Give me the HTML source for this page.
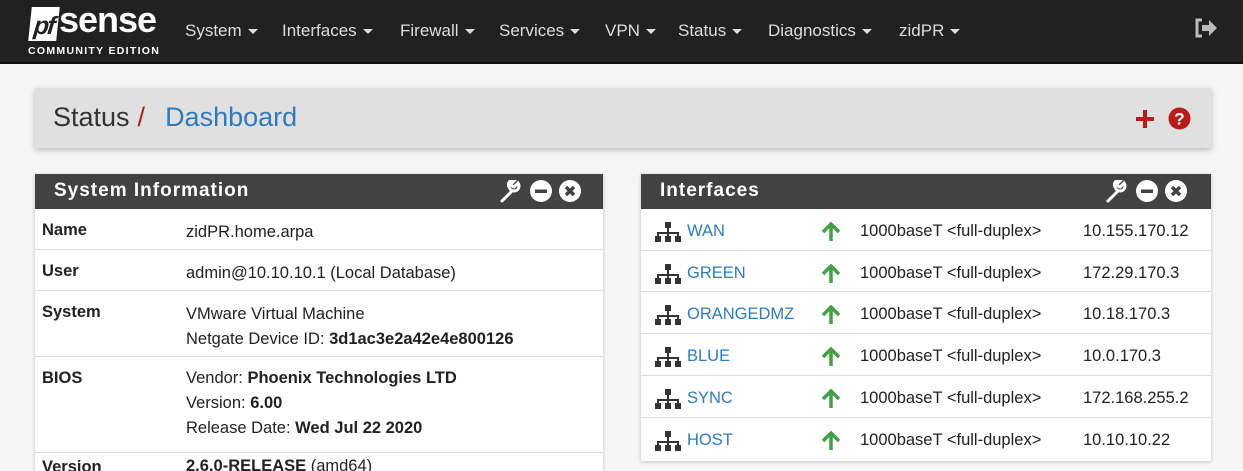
<!DOCTYPE html>
<html><head><meta charset="utf-8"><style>
*{margin:0;padding:0;box-sizing:border-box}
html,body{width:1243px;height:471px;overflow:hidden}
body{background:#f5f5f5;font-family:"Liberation Sans",sans-serif;font-size:16px;color:#212121;position:relative}
.nav{position:absolute;left:0;top:0;width:1243px;height:64px;background:#212121;border-bottom:2px solid #111}
.logo{position:absolute;left:30px;top:6px;color:#fff}
.pf{position:absolute;left:0;top:1px;width:28px;height:34px;background:#fff;color:#212121;font:italic bold 25px "Liberation Sans";line-height:38px;text-align:center;letter-spacing:-2px;transform:skewX(-6deg)}
.sense{position:absolute;left:29px;top:-7px;font:bold 36px "Liberation Sans";letter-spacing:-1px}
.ce{position:absolute;left:-2px;top:39px;font:bold 10.5px "Liberation Sans";letter-spacing:1.3px;white-space:nowrap}
.menu{position:absolute;top:21px;color:#ddd;font-size:17px;white-space:nowrap}
.menu span{position:absolute;white-space:nowrap}
.car{display:inline-block;width:0;height:0;border-left:5px solid transparent;border-right:5px solid transparent;border-top:5px solid #ddd;vertical-align:middle;margin-left:6px}
.bc{position:absolute;left:35px;top:88px;width:1176px;height:60px;background:#e0e0e0;box-shadow:0 2px 6px rgba(0,0,0,.25)}
.bc .t{position:absolute;left:18px;top:14px;font-size:27px;color:#333;white-space:nowrap}
.bc .t a{color:#2f7bbd;margin-left:20px}
.panel{position:absolute;top:174px;background:#fff;box-shadow:0 1px 4px rgba(0,0,0,.2)}
.ph{height:35px;background:#424242;color:#fff;font-size:19px;font-weight:bold;letter-spacing:1px;padding:6px 0 0 19px;position:relative}
.ph svg{position:absolute;top:6px}
.row{position:relative;border-bottom:1px solid #ddd;font-size:16.5px}
.lbl{position:absolute;left:7px;top:12px;font-weight:bold}
.val{position:absolute;left:151px;top:11px;line-height:25px}
.ir span{position:absolute;top:13px}
.blue{color:#2f7bbd}
</style></head><body>
<div class="nav">
 <div class="logo"><div class="pf">pf</div><div class="sense">sense</div><div class="ce">COMMUNITY EDITION</div></div>
 <div class="menu">
  <span style="left:185px">System<i class="car"></i></span>
  <span style="left:282px">Interfaces<i class="car"></i></span>
  <span style="left:400px">Firewall<i class="car"></i></span>
  <span style="left:499px">Services<i class="car"></i></span>
  <span style="left:605px">VPN<i class="car"></i></span>
  <span style="left:678px">Status<i class="car"></i></span>
  <span style="left:768px">Diagnostics<i class="car"></i></span>
  <span style="left:899px">zidPR<i class="car"></i></span>
 </div>
 <svg style="position:absolute;left:1194px;top:18px" width="24" height="20" viewBox="0 0 24 20"><path d="M8 2H3v16h5" fill="none" stroke="#bbb" stroke-width="3"/><path d="M8 7h7V2l8 8-8 8v-5H8z" fill="#bbb"/></svg>
</div>
<div class="bc"><div class="t">Status<span style="color:#b71c1c;margin-left:8px">/</span><a>Dashboard</a></div>
 <svg style="position:absolute;left:1100px;top:21px" width="20" height="20"><path d="M10 1v18M1 10h18" stroke="#b71c1c" stroke-width="4"/></svg>
 <svg style="position:absolute;left:1133px;top:19px" width="23" height="23" viewBox="0 0 23 23"><circle cx="11.5" cy="11.5" r="11" fill="#b71c1c"/><text x="11.5" y="17.5" text-anchor="middle" fill="#fff" font-family="Liberation Sans" font-weight="bold" font-size="17">?</text></svg>
</div>

<div class="panel" style="left:35px;width:568px;height:297px;overflow:hidden">
 <div class="ph">System Information
  <svg style="left:464px" width="88" height="24" viewBox="0 0 88 24"><path d="M3 21l9-9M11 9a5 5 0 1 0 8-6l-4 4-2-1-1-2 4-4a5 5 0 0 0-6 7" stroke="#fff" stroke-width="3" fill="none" stroke-linecap="round"/><circle cx="42" cy="11" r="11" fill="#fff"/><rect x="36" y="9.5" width="12" height="3.5" fill="#424242"/><circle cx="71" cy="11" r="11" fill="#fff"/><path d="M67 7l8 8M75 7l-8 8" stroke="#424242" stroke-width="3.5"/></svg>
 </div>
 <div class="row" style="height:41px"><span class="lbl">Name</span><span class="val">zidPR.home.arpa</span></div>
 <div class="row" style="height:41px"><span class="lbl">User</span><span class="val">admin@10.10.10.1 (Local Database)</span></div>
 <div class="row" style="height:66px"><span class="lbl">System</span><span class="val">VMware Virtual Machine<br>Netgate Device ID: <b>3d1ac3e2a42e4e800126</b></span></div>
 <div class="row" style="height:96px"><span class="lbl">BIOS</span><span class="val" style="top:9px">Vendor: <b>Phoenix Technologies LTD</b><br>Version: <b>6.00</b><br>Release Date: <b>Wed Jul 22 2020</b></span></div>
 <div class="row" style="height:40px;border:0"><span class="lbl" style="top:5px">Version</span><span class="val" style="top:1px"><b>2.6.0-RELEASE</b> (amd64)</span></div>
</div>

<div class="panel" style="left:641px;width:570px;height:287px">
 <div class="ph">Interfaces
  <svg style="left:464px" width="88" height="24" viewBox="0 0 88 24"><path d="M3 21l9-9M11 9a5 5 0 1 0 8-6l-4 4-2-1-1-2 4-4a5 5 0 0 0-6 7" stroke="#fff" stroke-width="3" fill="none" stroke-linecap="round"/><circle cx="42" cy="11" r="11" fill="#fff"/><rect x="36" y="9.5" width="12" height="3.5" fill="#424242"/><circle cx="71" cy="11" r="11" fill="#fff"/><path d="M67 7l8 8M75 7l-8 8" stroke="#424242" stroke-width="3.5"/></svg>
 </div>
</div>
<div style="position:absolute;left:641px;top:209px;width:570px">
 <div class="row ir" style="height:42px"><svg style="position:absolute;left:13px;top:13px" width="28" height="20" viewBox="0 0 28 20"><rect x="11" y="0" width="6" height="6" fill="#333"/><path d="M14 6v5M4 14v-3h20v3M14 11v3" stroke="#333" stroke-width="2" fill="none"/><rect x="1" y="14" width="6" height="6" fill="#333"/><rect x="11" y="14" width="6" height="6" fill="#333"/><rect x="21" y="14" width="6" height="6" fill="#333"/></svg><span class="blue" style="left:46px">WAN</span><svg style="position:absolute;left:180px;top:13px" width="20" height="20"><path d="M10 19V3M2 10l8-8 8 8" stroke="#43a047" stroke-width="3.5" fill="none"/></svg><span style="left:219px">1000baseT &lt;full-duplex&gt;</span><span style="left:442px">10.155.170.12</span></div>
 <div class="row ir" style="height:41px"><svg style="position:absolute;left:13px;top:13px" width="28" height="20" viewBox="0 0 28 20"><rect x="11" y="0" width="6" height="6" fill="#333"/><path d="M14 6v5M4 14v-3h20v3M14 11v3" stroke="#333" stroke-width="2" fill="none"/><rect x="1" y="14" width="6" height="6" fill="#333"/><rect x="11" y="14" width="6" height="6" fill="#333"/><rect x="21" y="14" width="6" height="6" fill="#333"/></svg><span class="blue" style="left:46px">GREEN</span><svg style="position:absolute;left:180px;top:13px" width="20" height="20"><path d="M10 19V3M2 10l8-8 8 8" stroke="#43a047" stroke-width="3.5" fill="none"/></svg><span style="left:219px">1000baseT &lt;full-duplex&gt;</span><span style="left:442px">172.29.170.3</span></div>
 <div class="row ir" style="height:42px"><svg style="position:absolute;left:13px;top:13px" width="28" height="20" viewBox="0 0 28 20"><rect x="11" y="0" width="6" height="6" fill="#333"/><path d="M14 6v5M4 14v-3h20v3M14 11v3" stroke="#333" stroke-width="2" fill="none"/><rect x="1" y="14" width="6" height="6" fill="#333"/><rect x="11" y="14" width="6" height="6" fill="#333"/><rect x="21" y="14" width="6" height="6" fill="#333"/></svg><span class="blue" style="left:46px">ORANGEDMZ</span><svg style="position:absolute;left:180px;top:13px" width="20" height="20"><path d="M10 19V3M2 10l8-8 8 8" stroke="#43a047" stroke-width="3.5" fill="none"/></svg><span style="left:219px">1000baseT &lt;full-duplex&gt;</span><span style="left:442px">10.18.170.3</span></div>
 <div class="row ir" style="height:42px"><svg style="position:absolute;left:13px;top:13px" width="28" height="20" viewBox="0 0 28 20"><rect x="11" y="0" width="6" height="6" fill="#333"/><path d="M14 6v5M4 14v-3h20v3M14 11v3" stroke="#333" stroke-width="2" fill="none"/><rect x="1" y="14" width="6" height="6" fill="#333"/><rect x="11" y="14" width="6" height="6" fill="#333"/><rect x="21" y="14" width="6" height="6" fill="#333"/></svg><span class="blue" style="left:46px">BLUE</span><svg style="position:absolute;left:180px;top:13px" width="20" height="20"><path d="M10 19V3M2 10l8-8 8 8" stroke="#43a047" stroke-width="3.5" fill="none"/></svg><span style="left:219px">1000baseT &lt;full-duplex&gt;</span><span style="left:442px">10.0.170.3</span></div>
 <div class="row ir" style="height:42px"><svg style="position:absolute;left:13px;top:13px" width="28" height="20" viewBox="0 0 28 20"><rect x="11" y="0" width="6" height="6" fill="#333"/><path d="M14 6v5M4 14v-3h20v3M14 11v3" stroke="#333" stroke-width="2" fill="none"/><rect x="1" y="14" width="6" height="6" fill="#333"/><rect x="11" y="14" width="6" height="6" fill="#333"/><rect x="21" y="14" width="6" height="6" fill="#333"/></svg><span class="blue" style="left:46px">SYNC</span><svg style="position:absolute;left:180px;top:13px" width="20" height="20"><path d="M10 19V3M2 10l8-8 8 8" stroke="#43a047" stroke-width="3.5" fill="none"/></svg><span style="left:219px">1000baseT &lt;full-duplex&gt;</span><span style="left:442px">172.168.255.2</span></div>
 <div class="row ir" style="height:41px;border:0"><svg style="position:absolute;left:13px;top:13px" width="28" height="20" viewBox="0 0 28 20"><rect x="11" y="0" width="6" height="6" fill="#333"/><path d="M14 6v5M4 14v-3h20v3M14 11v3" stroke="#333" stroke-width="2" fill="none"/><rect x="1" y="14" width="6" height="6" fill="#333"/><rect x="11" y="14" width="6" height="6" fill="#333"/><rect x="21" y="14" width="6" height="6" fill="#333"/></svg><span class="blue" style="left:46px">HOST</span><svg style="position:absolute;left:180px;top:13px" width="20" height="20"><path d="M10 19V3M2 10l8-8 8 8" stroke="#43a047" stroke-width="3.5" fill="none"/></svg><span style="left:219px">1000baseT &lt;full-duplex&gt;</span><span style="left:442px">10.10.10.22</span></div>
</div>
</body></html>
